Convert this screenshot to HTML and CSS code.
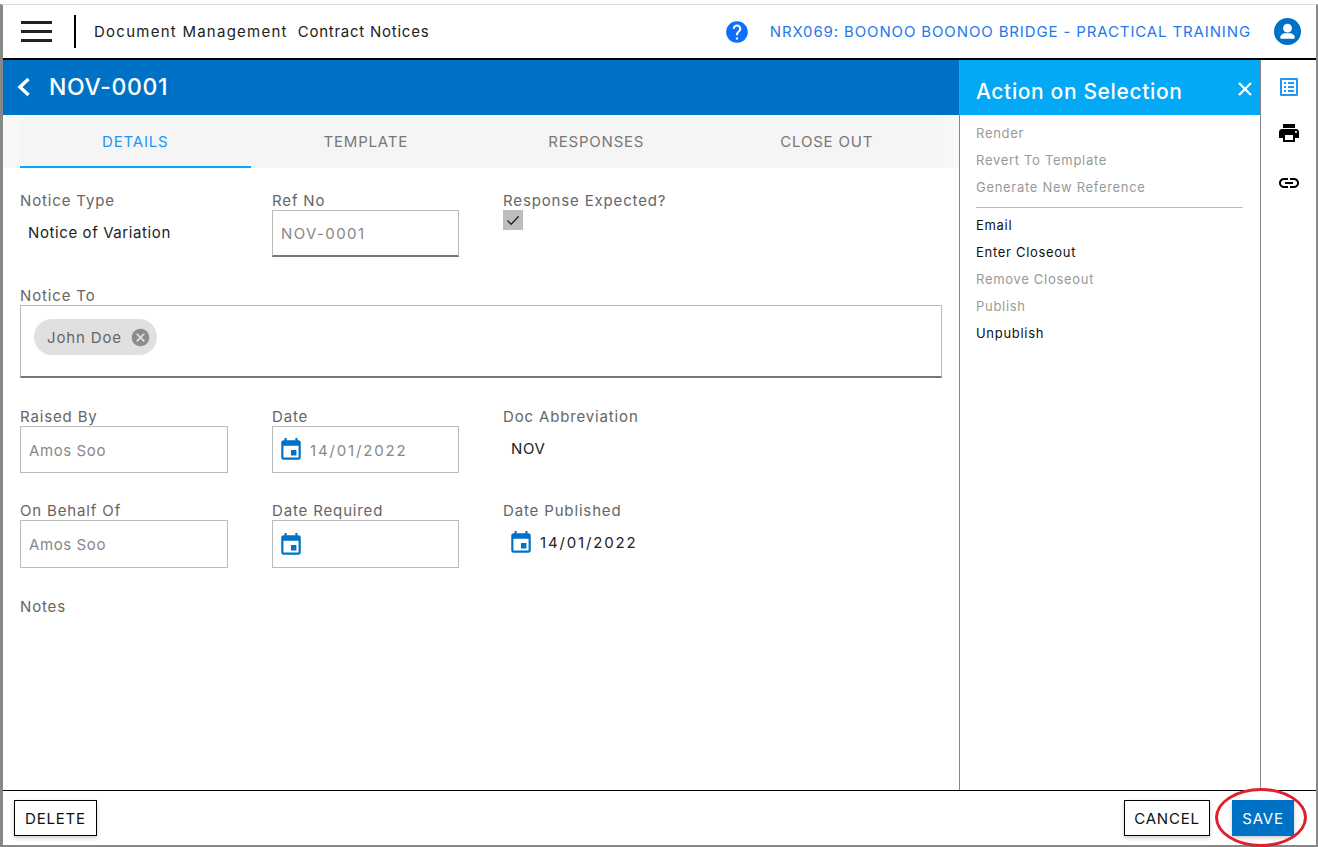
FILE: index.html
```html
<!DOCTYPE html>
<html lang="en">
<head>
  <meta charset="UTF-8">
  <title>NOV-0001 - Contract Notices</title>
  <link rel="stylesheet" href="styles.css">
</head>
<body>
  <div class="window">
    <!-- Top header -->
    <header class="topbar">
      <button class="burger" aria-label="Menu"><span></span><span></span><span></span></button>
      <div class="crumbs">
        <span class="crumb-wide">Document Management</span>
        <span>Contract Notices</span>
      </div>
      <svg class="help-icon" viewBox="0 0 24 24"><path d="M12 2C6.48 2 2 6.48 2 12s4.48 10 10 10 10-4.48 10-10S17.52 2 12 2zm1 17h-2v-2h2v2zm2.07-7.75l-.9.92C13.45 12.9 13 13.5 13 15h-2v-.5c0-1.1.45-2.1 1.17-2.83l1.24-1.26c.37-.36.59-.86.59-1.41 0-1.1-.9-2-2-2s-2 .9-2 2H8c0-2.21 1.79-4 4-4s4 1.79 4 4c0 .88-.36 1.68-.93 2.25z"/></svg>
      <span class="project">NRX069: BOONOO BOONOO BRIDGE - PRACTICAL TRAINING</span>
      <svg class="user-icon" viewBox="0 0 28 28">
        <circle cx="14" cy="14" r="14" fill="#0072c6"/>
        <circle cx="14" cy="10.5" r="4.6" fill="#fff"/>
        <path d="M6.5 20.5c0-3 2.6-4.6 5-4.6h5c2.400 0 5 1.600 5 4.600 0 .6-.5 1-1 1h-13c-.5 0-1-.4-1-1z" fill="#fff"/>
      </svg>
    </header>

    <div class="main">
      <!-- Left: the notice -->
      <section class="content">
        <div class="titlebar">
          <svg class="back-icon" viewBox="0 0 14 20"><path d="M11.500 2 3 10l8.500 8" fill="none" stroke="#fff" stroke-width="3.400"/></svg>
          <h1>NOV-0001</h1>
        </div>
        <nav class="tabs">
          <a class="tab active">DETAILS</a>
          <a class="tab">TEMPLATE</a>
          <a class="tab">RESPONSES</a>
          <a class="tab">CLOSE OUT</a>
        </nav>

        <form class="form">
          <div class="row">
            <div class="field">
              <label>Notice Type</label>
              <div class="plain">Notice of Variation</div>
            </div>
            <div class="field">
              <label>Ref No</label>
              <div class="input underline wide ref">NOV-0001</div>
            </div>
            <div class="field">
              <label>Response Expected?</label>
              <div class="checkbox">
                <svg viewBox="0 0 20 20"><path d="M4.500 10.500l3.700 3.700 7.500-8" fill="none" stroke="#222" stroke-width="1.300"/></svg>
              </div>
            </div>
          </div>

          <div class="field">
            <label>Notice To</label>
            <div class="tagbox">
              <span class="chip">John Doe
                <svg viewBox="0 0 24 24"><path d="M12 2C6.470 2 2 6.470 2 12s4.470 10 10 10 10-4.470 10-10S17.530 2 12 2zm5 13.590L15.590 17 12 13.410 8.410 17 7 15.590 10.590 12 7 8.410 8.410 7 12 10.590 15.590 7 17 8.410 13.410 12 17 15.590z"/></svg>
              </span>
            </div>
          </div>

          <div class="row">
            <div class="field">
              <label>Raised By</label>
              <div class="input">Amos Soo</div>
            </div>
            <div class="field">
              <label>Date</label>
              <div class="input wide with-icon">
                <svg class="cal" viewBox="0 0 24 24"><path d="M17 12h-5v5h5v-5zM16 1v2H8V1H6v2H5c-1.110 0-1.990.9-1.990 2L3 19c0 1.100.89 2 2 2h14c1.100 0 2-.9 2-2V5c0-1.100-.9-2-2-2h-1V1h-2zm3 18H5V8h14v11z"/></svg>
                <span class="date">14/01/2022</span>
              </div>
            </div>
            <div class="field">
              <label>Doc Abbreviation</label>
              <div class="plain">NOV</div>
            </div>
          </div>

          <div class="row row-tall">
            <div class="field">
              <label>On Behalf Of</label>
              <div class="input">Amos Soo</div>
            </div>
            <div class="field">
              <label>Date Required</label>
              <div class="input wide with-icon">
                <svg class="cal" viewBox="0 0 24 24"><path d="M17 12h-5v5h5v-5zM16 1v2H8V1H6v2H5c-1.110 0-1.990.9-1.990 2L3 19c0 1.100.89 2 2 2h14c1.100 0 2-.9 2-2V5c0-1.100-.9-2-2-2h-1V1h-2zm3 18H5V8h14v11z"/></svg>
              </div>
            </div>
            <div class="field">
              <label>Date Published</label>
              <div class="plain with-icon">
                <svg class="cal" viewBox="0 0 24 24"><path d="M17 12h-5v5h5v-5zM16 1v2H8V1H6v2H5c-1.110 0-1.990.9-1.990 2L3 19c0 1.100.89 2 2 2h14c1.100 0 2-.9 2-2V5c0-1.100-.9-2-2-2h-1V1h-2zm3 18H5V8h14v11z"/></svg>
                <span class="date">14/01/2022</span>
              </div>
            </div>
          </div>

          <div class="field">
            <label>Notes</label>
          </div>
        </form>
      </section>

      <!-- Middle: action panel -->
      <aside class="actions">
        <div class="actions-head">
          <h2>Action on Selection</h2>
          <svg class="close-icon" viewBox="0 0 14 14"><path d="M1 1l12 12M13 1L1 13" stroke="#fff" stroke-width="2.200"/></svg>
        </div>
        <ul class="action-list">
          <li class="off">Render</li>
          <li class="off">Revert To Template</li>
          <li class="off">Generate New Reference</li>
        </ul>
        <ul class="action-list second">
          <li>Email</li>
          <li>Enter Closeout</li>
          <li class="off">Remove Closeout</li>
          <li class="off">Publish</li>
          <li>Unpublish</li>
        </ul>
      </aside>

      <!-- Right: icon rail -->
      <div class="rail">
        <svg class="rail-blue" viewBox="0 0 24 24"><path d="M19 5v14H5V5h14m1.100-2H3.900c-.5 0-.9.4-.9.9v16.200c0 .4.4.9.9.9h16.200c.4 0 .9-.5.9-.9V3.900c0-.5-.5-.9-.9-.9zM11 7h6v2h-6V7zm0 4h6v2h-6v-2zm0 4h6v2h-6zM7 7h2v2H7zm0 4h2v2H7zm0 4h2v2H7z"/></svg>
        <svg viewBox="0 0 24 24"><path d="M19 8H5c-1.660 0-3 1.340-3 3v6h4v4h12v-4h4v-6c0-1.660-1.340-3-3-3zm-3 11H8v-5h8v5zm3-7c-.55 0-1-.45-1-1s.45-1 1-1 1 .45 1 1-.45 1-1 1zm-1-9H6v4h12V3z"/></svg>
        <svg class="rail-link" viewBox="0 0 24 24"><path d="M3.900 12c0-1.710 1.390-3.100 3.100-3.100h4V7H7c-2.760 0-5 2.240-5 5s2.240 5 5 5h4v-1.900H7c-1.710 0-3.100-1.390-3.100-3.100zM8 13h8v-2H8v2zm9-6h-4v1.900h4c1.710 0 3.100 1.390 3.100 3.100s-1.390 3.100-3.100 3.100h-4V17h4c2.760 0 5-2.240 5-5s-2.240-5-5-5z"/></svg>
      </div>
    </div>

    <footer class="footer">
      <button class="btn btn-delete">DELETE</button>
      <div class="footer-right">
        <button class="btn btn-cancel">CANCEL</button>
        <button class="btn btn-save">SAVE</button>
      </div>
    </footer>

    <!-- Red marker drawn over the save button -->
    <div class="marker"></div>
  </div>
</body>
</html>
```

FILE: styles.css
```css
* {
  margin: 0;
  padding: 0;
  box-sizing: border-box;
}
html, body {
  height: 847px;
  overflow: hidden;
  background: #fff;
  font-family: Inter, "Open Sans", sans-serif;
  font-size: 15px;
  letter-spacing: 0.6px;
}
svg {
  display: block;
  flex: none;
}
.window {
  position: relative;
  height: 843px;
  margin-top: 4px;
  display: flex;
  flex-direction: column;
  border-top: 1px solid #ddd;
  border-left: 3px solid #888;
  border-right: 2px solid #888;
  border-bottom: 2px solid #888;
}

/* Header */
.topbar {
  height: 55px;
  flex: none;
  display: flex;
  align-items: center;
  padding-left: 18px;
  border-bottom: 2px solid #000;
}
.burger {
  width: 31px;
  height: 21px;
  flex: none;
  display: flex;
  flex-direction: column;
  justify-content: space-between;
  border: none;
  background: none;
}
.burger span {
  height: 3px;
  background: #222;
}
.crumbs {
  height: 33px;
  margin-left: 22px;
  padding-left: 18px;
  border-left: 2px solid #000;
  display: flex;
  align-items: center;
  gap: 10px;
  color: #222;
  letter-spacing: 0.75px;
}
.crumb-wide {
  letter-spacing: 1.25px;
}
.help-icon {
  width: 26px;
  height: 26px;
  margin-left: auto;
  fill: #0d6efd;
}
.project {
  margin-left: 20px;
  color: #1f78f0;
  letter-spacing: 0.87px;
}
.user-icon {
  width: 27px;
  height: 27px;
  margin: 0 15px 0 23px;
}

.main {
  flex: 1;
  min-height: 0;
  display: flex;
}

/* Left */
.content {
  width: 956px;
  flex: none;
}
.titlebar {
  height: 55px;
  display: flex;
  align-items: center;
  padding: 0 0 2px 14px;
  background: #0072c6;
}
.back-icon {
  width: 14px;
  height: 20px;
}
.titlebar h1 {
  margin-left: 18px;
  font-size: 23px;
  font-weight: 500;
  letter-spacing: 0.65px;
  color: #fff;
}
.tabs {
  height: 53px;
  display: flex;
  padding: 0 17px;
  background: #f7f7f7;
}
.tab {
  flex: 1;
  display: flex;
  align-items: center;
  justify-content: center;
  padding-top: 2px;
  background: #f5f5f5;
  color: #777;
  letter-spacing: 0.8px;
  border-bottom: 2px solid transparent;
}
.tab.active {
  color: #2196f3;
  border-bottom-color: #03a9f4;
}
.form {
  padding: 22px 17px 0;
  display: flex;
  flex-direction: column;
  gap: 28px;
}
.row {
  display: grid;
  grid-template-columns: 252px 231px 1fr;
}
.row-tall {
  margin-top: -1px;
}
.row-tall .input {
  height: 48px;
}
.field label {
  display: block;
  height: 20px;
  line-height: 21px;
  color: #666;
  letter-spacing: 0.85px;
}
.input {
  width: 208px;
  height: 47px;
  padding: 1px 0 0 8px;
  display: flex;
  align-items: center;
  border: 1px solid #bbb;
  color: #888;
}
.input.wide {
  width: 187px;
}
.underline {
  border-bottom: 2px solid #777;
}
.ref {
  letter-spacing: 1.4px;
}
.plain {
  height: 45px;
  padding-left: 8px;
  display: flex;
  align-items: center;
  color: #222;
}
.with-icon {
  gap: 6px;
}
.date {
  letter-spacing: 1.85px;
}
.cal {
  width: 26px;
  height: 26px;
  margin-left: -3px;
  fill: #0072c6;
}
.checkbox {
  width: 20px;
  height: 20px;
  background: #bdbdbd;
}
.tagbox {
  height: 73px;
  padding: 13px 13px;
  border: 1px solid #bbb;
  border-bottom: 2px solid #777;
}
.chip {
  display: inline-flex;
  align-items: center;
  height: 36px;
  padding: 0 6px 0 13px;
  gap: 8px;
  border-radius: 18px;
  background: #e0e0e0;
  color: #666;
  letter-spacing: 0.85px;
}
.chip svg {
  width: 21px;
  height: 21px;
  fill: #8c8c8c;
}

/* Action panel */
.actions {
  width: 302px;
  flex: none;
  border-left: 1px solid #888;
  border-right: 1px solid #888;
}
.actions-head {
  height: 55px;
  display: flex;
  align-items: center;
  justify-content: space-between;
  padding: 8px 8px 0 16px;
  background: #03a9f4;
}
.actions-head h2 {
  font-size: 21px;
  font-weight: 500;
  letter-spacing: 0.63px;
  color: #fff;
}
.close-icon {
  width: 14px;
  height: 14px;
  margin-top: -6px;
}
.action-list {
  list-style: none;
  margin: 5px 17px 0 16px;
  padding-bottom: 6px;
  font-size: 13px;
  letter-spacing: 0.7px;
  color: #111;
}
.action-list li {
  height: 27px;
  line-height: 27px;
}
.action-list .off {
  color: #999;
}
.action-list.second {
  margin-top: 4px;
}
.action-list:first-of-type {
  border-bottom: 1px solid #bbb;
}

/* Icon rail */
.rail {
  flex: 1;
  display: flex;
  flex-direction: column;
  align-items: center;
  gap: 22px;
  padding-top: 15px;
}
.rail svg {
  width: 24px;
  height: 24px;
  fill: #000;
}
.rail .rail-blue {
  fill: #2196f3;
}
.rail .rail-link {
  margin-top: 4px;
}

/* Footer */
.footer {
  height: 55px;
  flex: none;
  display: flex;
  justify-content: space-between;
  padding: 9px 22px 0 11px;
  border-top: 1px solid #000;
}
.footer-right {
  display: flex;
  gap: 22px;
}
.btn {
  height: 36px;
  border: 1px solid #000;
  background: #fff;
  font: inherit;
  letter-spacing: 0.8px;
  color: #111;
  box-shadow: 0 2px 4px rgba(0, 0, 0, 0.2);
}
.btn-delete {
  width: 83px;
}
.btn-cancel {
  width: 86px;
}
.btn-save {
  width: 62px;
  border-color: #0072c6;
  background: #0072c6;
  color: #fff;
}
.marker {
  position: absolute;
  left: 1212px;
  top: 783px;
  width: 92px;
  height: 59px;
  border: 3px solid #e0202c;
  border-radius: 50%;
}
```
